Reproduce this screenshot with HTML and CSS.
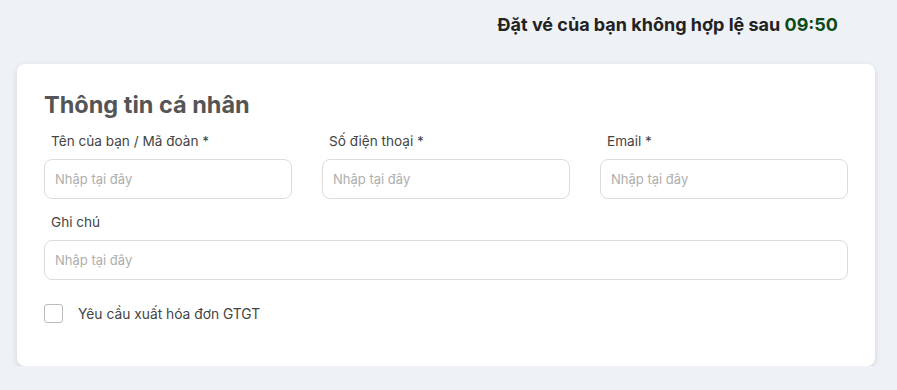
FILE: index.html
```html
<!DOCTYPE html>
<html lang="vi">
<head>
    <meta charset="UTF-8">
    <meta name="viewport" content="width=device-width, initial-scale=1.0">
    <title>Thông tin cá nhân</title>
    <link rel="stylesheet" href="styles.css">
</head>
<body>
    <div class="page">
        <div class="timer">Đặt vé của bạn không hợp lệ sau <span class="time">09:50</span></div>
        <div class="card">
            <h2>Thông tin cá nhân</h2>
            <div class="row three">
                <div class="field">
                    <label>Tên của bạn / Mã đoàn *</label>
                    <input type="text" placeholder="Nhập tại đây">
                </div>
                <div class="field">
                    <label>Số điện thoại *</label>
                    <input type="text" placeholder="Nhập tại đây">
                </div>
                <div class="field">
                    <label>Email *</label>
                    <input type="text" placeholder="Nhập tại đây">
                </div>
            </div>
            <div class="field">
                <label>Ghi chú</label>
                <input type="text" placeholder="Nhập tại đây">
            </div>
            <label class="check">
                <input type="checkbox">
                <span class="box"></span>
                Yêu cầu xuất hóa đơn GTGT
            </label>
        </div>
    </div>
</body>
</html>
```

FILE: styles.css
```css
body {
    margin: 0;
    padding: 0;
    background-color: #eef1f6;
    font-family: Inter, "Noto Sans", sans-serif;
    color: #333;
}
.page {
    padding: 0 22px 0 17px;
}
.timer {
    text-align: right;
    padding: 14px 37px 0 0;
    height: 64px;
    box-sizing: border-box;
    font-size: 18px;
    font-weight: 700;
    color: #222;
}
.time {
    color: #0e4a16;
}
.card {
    background: #fff;
    border-radius: 8px;
    box-shadow: 0 2px 6px rgba(0, 0, 0, 0.12);
    padding: 26px 27px 43px;
}
.card h2 {
    margin: 0 0 13px;
    font-size: 23.5px;
    font-weight: 700;
    color: #555;
    line-height: 30px;
}
.row.three {
    display: grid;
    grid-template-columns: 1fr 1fr 1fr;
    column-gap: 30px;
}
.field {
    margin-bottom: 15px;
}
.field label {
    display: block;
    padding-left: 7px;
    font-size: 13.6px;
    line-height: 17px;
    color: #444;
    margin-bottom: 9px;
}
.field input {
    display: block;
    width: 100%;
    box-sizing: border-box;
    height: 40px;
    border: 1px solid #dcdcdc;
    border-radius: 8px;
    padding: 0 10px;
    font-family: inherit;
    font-size: 13px;
    color: #333;
    outline: none;
}
.field input::placeholder {
    color: #aeaeae;
}
.check {
    display: flex;
    align-items: center;
    gap: 15px;
    margin-top: 24px;
    font-size: 13.8px;
    color: #444;
    cursor: pointer;
}
.check input {
    display: none;
}
.check .box {
    width: 17px;
    height: 17px;
    border: 1px solid #bbb;
    border-radius: 3px;
}
```
